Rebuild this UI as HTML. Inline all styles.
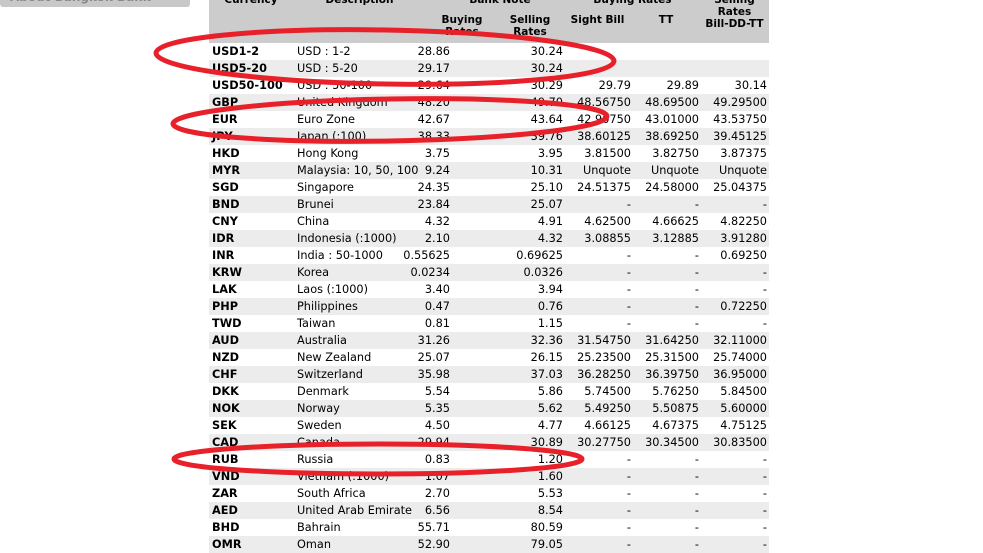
<!DOCTYPE html>
<html><head><meta charset="utf-8"><style>
body{margin:0;width:983px;height:549px;overflow:hidden;background:#fff;font-family:"DejaVu Sans","Liberation Sans",sans-serif;font-size:11.3px;color:#000;position:relative}
.btn{position:absolute;left:0;top:-12px;width:190px;height:19px;background:#c8c8c8;border-radius:3px;color:#888;font-weight:bold;font-size:12px;padding-left:10px;box-sizing:border-box;line-height:18px}
.hd{position:absolute;left:209px;top:0;width:560px;height:43px;background:#ccc}
.h{position:absolute;font-weight:bold;font-size:10.5px;text-align:center;line-height:12px}
table{position:absolute;left:209px;top:43px;width:560px;border-collapse:collapse;table-layout:fixed}
td{height:17px;padding:0;line-height:17px;white-space:nowrap;overflow:visible}
tr:nth-child(even){background:#ececec}
td:nth-child(1){font-weight:bold;padding-left:3px}
td:nth-child(n+3){text-align:right;padding-right:2px}
svg{position:absolute;left:0;top:0}
</style></head><body>
<div class="btn">About Bangkok Bank</div>
<div class="hd"></div>
<div class="h" style="left:209px;top:-6px;width:84px">Currency</div>
<div class="h" style="left:297px;top:-6px;width:125px">Description</div>
<div class="h" style="left:430px;top:-6px;width:140px">Bank Note</div>
<div class="h" style="left:565px;top:-6px;width:135px">Buying Rates</div>
<div class="h" style="left:700px;top:-6px;width:69px">Selling<br>Rates<br>Bill-DD-TT</div>
<div class="h" style="left:430px;top:14px;width:64px">Buying<br>Rates</div>
<div class="h" style="left:500px;top:14px;width:60px">Selling<br>Rates</div>
<div class="h" style="left:565px;top:14px;width:65px">Sight Bill</div>
<div class="h" style="left:632px;top:14px;width:68px">TT</div>
<table>
<colgroup><col style="width:88px"><col style="width:103px"><col style="width:52px"><col style="width:113px"><col style="width:68px"><col style="width:68px"><col style="width:68px"></colgroup>
<tr><td>USD1-2</td><td>USD : 1-2</td><td>28.86</td><td>30.24</td><td></td><td></td><td></td></tr>
<tr><td>USD5-20</td><td>USD : 5-20</td><td>29.17</td><td>30.24</td><td></td><td></td><td></td></tr>
<tr><td>USD50-100</td><td>USD : 50-100</td><td>29.64</td><td>30.29</td><td>29.79</td><td>29.89</td><td>30.14</td></tr>
<tr><td>GBP</td><td>United Kingdom</td><td>48.20</td><td>49.70</td><td>48.56750</td><td>48.69500</td><td>49.29500</td></tr>
<tr><td>EUR</td><td>Euro Zone</td><td>42.67</td><td>43.64</td><td>42.90750</td><td>43.01000</td><td>43.53750</td></tr>
<tr><td>JPY</td><td>Japan (:100)</td><td>38.33</td><td>39.76</td><td>38.60125</td><td>38.69250</td><td>39.45125</td></tr>
<tr><td>HKD</td><td>Hong Kong</td><td>3.75</td><td>3.95</td><td>3.81500</td><td>3.82750</td><td>3.87375</td></tr>
<tr><td>MYR</td><td>Malaysia: 10, 50, 100</td><td>9.24</td><td>10.31</td><td>Unquote</td><td>Unquote</td><td>Unquote</td></tr>
<tr><td>SGD</td><td>Singapore</td><td>24.35</td><td>25.10</td><td>24.51375</td><td>24.58000</td><td>25.04375</td></tr>
<tr><td>BND</td><td>Brunei</td><td>23.84</td><td>25.07</td><td>-</td><td>-</td><td>-</td></tr>
<tr><td>CNY</td><td>China</td><td>4.32</td><td>4.91</td><td>4.62500</td><td>4.66625</td><td>4.82250</td></tr>
<tr><td>IDR</td><td>Indonesia (:1000)</td><td>2.10</td><td>4.32</td><td>3.08855</td><td>3.12885</td><td>3.91280</td></tr>
<tr><td>INR</td><td>India : 50-1000</td><td>0.55625</td><td>0.69625</td><td>-</td><td>-</td><td>0.69250</td></tr>
<tr><td>KRW</td><td>Korea</td><td>0.0234</td><td>0.0326</td><td>-</td><td>-</td><td>-</td></tr>
<tr><td>LAK</td><td>Laos (:1000)</td><td>3.40</td><td>3.94</td><td>-</td><td>-</td><td>-</td></tr>
<tr><td>PHP</td><td>Philippines</td><td>0.47</td><td>0.76</td><td>-</td><td>-</td><td>0.72250</td></tr>
<tr><td>TWD</td><td>Taiwan</td><td>0.81</td><td>1.15</td><td>-</td><td>-</td><td>-</td></tr>
<tr><td>AUD</td><td>Australia</td><td>31.26</td><td>32.36</td><td>31.54750</td><td>31.64250</td><td>32.11000</td></tr>
<tr><td>NZD</td><td>New Zealand</td><td>25.07</td><td>26.15</td><td>25.23500</td><td>25.31500</td><td>25.74000</td></tr>
<tr><td>CHF</td><td>Switzerland</td><td>35.98</td><td>37.03</td><td>36.28250</td><td>36.39750</td><td>36.95000</td></tr>
<tr><td>DKK</td><td>Denmark</td><td>5.54</td><td>5.86</td><td>5.74500</td><td>5.76250</td><td>5.84500</td></tr>
<tr><td>NOK</td><td>Norway</td><td>5.35</td><td>5.62</td><td>5.49250</td><td>5.50875</td><td>5.60000</td></tr>
<tr><td>SEK</td><td>Sweden</td><td>4.50</td><td>4.77</td><td>4.66125</td><td>4.67375</td><td>4.75125</td></tr>
<tr><td>CAD</td><td>Canada</td><td>29.94</td><td>30.89</td><td>30.27750</td><td>30.34500</td><td>30.83500</td></tr>
<tr><td>RUB</td><td>Russia</td><td>0.83</td><td>1.20</td><td>-</td><td>-</td><td>-</td></tr>
<tr><td>VND</td><td>Vietnam (:1000)</td><td>1.07</td><td>1.60</td><td>-</td><td>-</td><td>-</td></tr>
<tr><td>ZAR</td><td>South Africa</td><td>2.70</td><td>5.53</td><td>-</td><td>-</td><td>-</td></tr>
<tr><td>AED</td><td>United Arab Emirate</td><td>6.56</td><td>8.54</td><td>-</td><td>-</td><td>-</td></tr>
<tr><td>BHD</td><td>Bahrain</td><td>55.71</td><td>80.59</td><td>-</td><td>-</td><td>-</td></tr>
<tr><td>OMR</td><td>Oman</td><td>52.90</td><td>79.05</td><td>-</td><td>-</td><td>-</td></tr>
</table>
<svg width="983" height="549"><g fill="none" stroke="#e8202a" stroke-width="5">
<ellipse cx="385" cy="57" rx="229" ry="27" transform="rotate(1 385 57)"/>
<ellipse cx="390" cy="120" rx="217" ry="21" transform="rotate(-1 390 120)"/>
<ellipse cx="378" cy="459" rx="204" ry="15"/>
</g></svg>
</body></html>
